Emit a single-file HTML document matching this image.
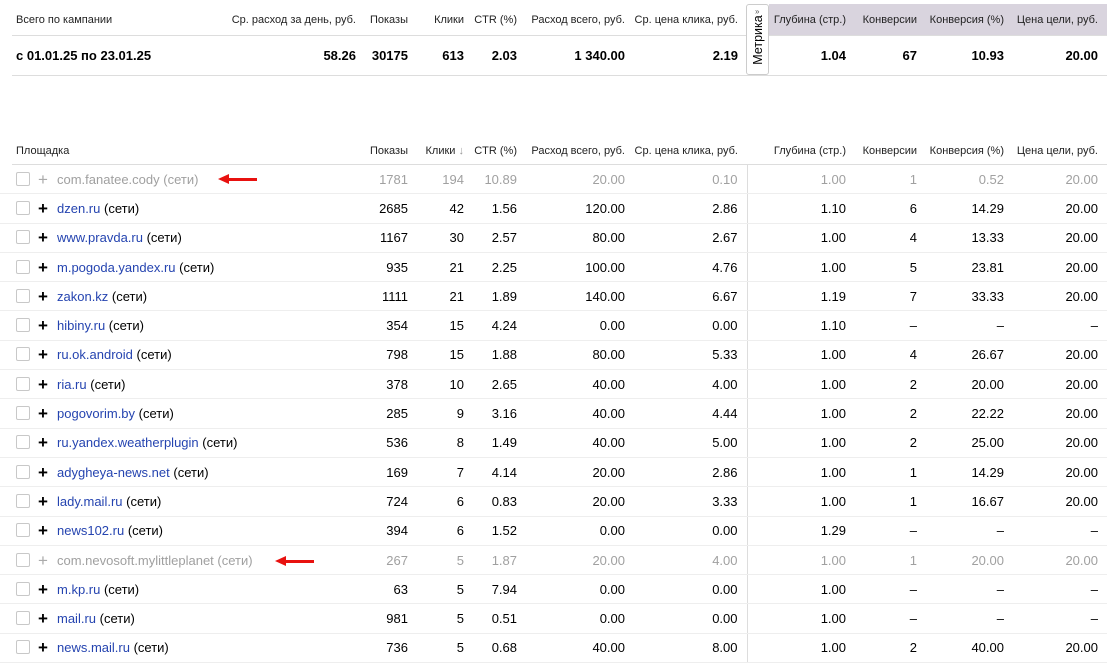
<!DOCTYPE html>
<html><head><meta charset="utf-8"><style>
body{margin:0;width:1107px;height:665px;overflow:hidden;background:#fff;font-family:"Liberation Sans",Arial,sans-serif;color:#000;position:relative}
table{border-collapse:collapse;table-layout:fixed;position:absolute;left:0}
td{padding:0 9px 0 0;text-align:right;white-space:nowrap;font-size:13px}
.h td{font-size:11px;color:#222}
td.l{text-align:left;padding-left:16px}
#t1{top:4px;width:1107px}
#t1 tr.h td{height:31px;border-bottom:1px solid #ddd}
#t1 tr.d td{height:39px;border-bottom:1px solid #ddd;font-weight:bold;font-size:13px}
.lav{position:absolute;left:769px;top:4px;width:338px;height:31px;background:#d9d4de}
#t2{top:138px;width:1107px}
#t2 tr.h td{height:26px;border-bottom:1px solid #ddd}
#t2 tr.r td{height:28.3px;border-bottom:1px solid #eee}
#t2 td.sep{border-left:1px solid #ddd}
.cb{display:inline-block;width:12px;height:12px;border:1px solid #c8c8c8;border-radius:2px;vertical-align:-2px;margin-right:8px}
.pl{display:inline-block;width:14px;font-size:17px;font-weight:bold;line-height:10px;margin-right:5px;vertical-align:-1px}
a{color:#2544b0;text-decoration:none}
tr.g td,tr.g a{color:#a0a0a0}
tr.g .pl{color:#aaa;font-weight:normal}
.mt{position:absolute;left:746px;top:4px;width:23px;height:71px;border:1px solid #ccc;border-radius:3px;background:#fff;box-sizing:border-box}
.mt span{position:absolute;left:50%;top:50%;transform:translate(-50%,-50%) rotate(-90deg);font-size:12.5px;white-space:nowrap}
.mt i{position:absolute;top:2px;left:8px;font-size:8px;font-style:normal;color:#555}
.line{position:absolute;left:0;width:12px;background:#fff;height:1px}
.ar{position:absolute;height:3px;background:#e8110f}
.ar:before{content:"";position:absolute;left:-10px;top:-4px;border-right:11px solid #e8110f;border-top:5.5px solid transparent;border-bottom:5.5px solid transparent}
</style></head><body>
<div class="lav"></div>
<table id="t1">
<colgroup><col style="width:365px"><col style="width:52px"><col style="width:56px"><col style="width:53px"><col style="width:108px"><col style="width:113px"><col style="width:108px"><col style="width:71px"><col style="width:87px"><col style="width:94px"></colgroup>
<tr class="h"><td class="l" style="position:relative">Всего по кампании<span style="position:absolute;right:9px;top:10px">Ср. расход за день, руб.</span></td><td>Показы</td><td>Клики</td><td>CTR (%)</td><td>Расход всего, руб.</td><td>Ср. цена клика, руб.</td><td>Глубина (стр.)</td><td>Конверсии</td><td>Конверсия (%)</td><td>Цена цели, руб.</td></tr>
<tr class="d"><td class="l" style="position:relative">с 01.01.25 по 23.01.25<span style="position:absolute;right:9px;top:12px">58.26</span></td><td>30175</td><td>613</td><td>2.03</td><td>1 340.00</td><td>2.19</td><td>1.04</td><td>67</td><td>10.93</td><td>20.00</td></tr>
</table>
<div class="line" style="top:35px"></div><div class="line" style="top:75px"></div>
<div class="mt"><i>»</i><span>Метрика</span></div>
<table id="t2">
<colgroup><col style="width:365px"><col style="width:52px"><col style="width:56px"><col style="width:53px"><col style="width:108px"><col style="width:113px"><col style="width:108px"><col style="width:71px"><col style="width:87px"><col style="width:94px"></colgroup>
<tr class="h"><td class="l">Площадка</td><td>Показы</td><td>Клики <span style="color:#999">↓</span></td><td>CTR (%)</td><td>Расход всего, руб.</td><td>Ср. цена клика, руб.</td><td>Глубина (стр.)</td><td>Конверсии</td><td>Конверсия (%)</td><td>Цена цели, руб.</td></tr>
</table>
<div class="line" style="top:164px"></div>
<div class="ar" style="left:228px;top:178px;width:29px"></div>
<div class="ar" style="left:285px;top:560px;width:29px"></div>
<script>
var d=[["com.fanatee.cody",1781,194,"10.89","20.00","0.10","1.00","1","0.52","20.00",1],
["dzen.ru",2685,42,"1.56","120.00","2.86","1.10","6","14.29","20.00"],
["www.pravda.ru",1167,30,"2.57","80.00","2.67","1.00","4","13.33","20.00"],
["m.pogoda.yandex.ru",935,21,"2.25","100.00","4.76","1.00","5","23.81","20.00"],
["zakon.kz",1111,21,"1.89","140.00","6.67","1.19","7","33.33","20.00"],
["hibiny.ru",354,15,"4.24","0.00","0.00","1.10","–","–","–"],
["ru.ok.android",798,15,"1.88","80.00","5.33","1.00","4","26.67","20.00"],
["ria.ru",378,10,"2.65","40.00","4.00","1.00","2","20.00","20.00"],
["pogovorim.by",285,9,"3.16","40.00","4.44","1.00","2","22.22","20.00"],
["ru.yandex.weatherplugin",536,8,"1.49","40.00","5.00","1.00","2","25.00","20.00"],
["adygheya-news.net",169,7,"4.14","20.00","2.86","1.00","1","14.29","20.00"],
["lady.mail.ru",724,6,"0.83","20.00","3.33","1.00","1","16.67","20.00"],
["news102.ru",394,6,"1.52","0.00","0.00","1.29","–","–","–"],
["com.nevosoft.mylittleplanet",267,5,"1.87","20.00","4.00","1.00","1","20.00","20.00",1],
["m.kp.ru",63,5,"7.94","0.00","0.00","1.00","–","–","–"],
["mail.ru",981,5,"0.51","0.00","0.00","1.00","–","–","–"],
["news.mail.ru",736,5,"0.68","40.00","8.00","1.00","2","40.00","20.00"]];
var t=document.getElementById("t2");
d.forEach(function(r){var tr=t.insertRow();tr.className="r"+(r[10]?" g":"");
var h='<td class="l"><span class="cb"></span><span class="pl">+</span><a>'+r[0]+'</a> (сети)</td>';
for(var i=1;i<10;i++)h+='<td'+(i==6?' class="sep"':'')+'>'+r[i]+'</td>';tr.innerHTML=h;});
</script>
</body></html>
